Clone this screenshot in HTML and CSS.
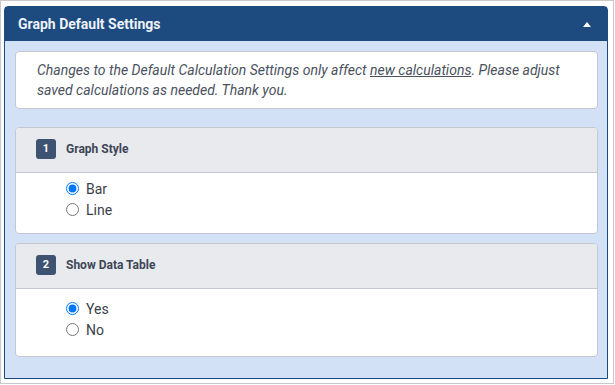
FILE: index.html
```html
<!DOCTYPE html>
<html lang="en">
<head>
    <meta charset="UTF-8">
    <meta name="viewport" content="width=device-width, initial-scale=1.0">
    <title>Graph Default Settings</title>
    <link rel="stylesheet" href="styles.css">
</head>
<body>
    <div class="frame">
        <section class="panel">
            <header class="panel-header">
                <h1>Graph Default Settings</h1>
                <span class="caret"></span>
            </header>

            <div class="panel-body">
                <div class="note">
                    <p>Changes to the Default Calculation Settings only affect <u>new calculations</u>. Please adjust saved calculations as needed. Thank you.</p>
                </div>

                <div class="card">
                    <div class="card-header">
                        <span class="badge">1</span>
                        <h2>Graph Style</h2>
                    </div>
                    <div class="card-body">
                        <label class="option"><input type="radio" name="style" checked> Bar</label>
                        <label class="option"><input type="radio" name="style"> Line</label>
                    </div>
                </div>

                <div class="card card-last">
                    <div class="card-header">
                        <span class="badge">2</span>
                        <h2>Show Data Table</h2>
                    </div>
                    <div class="card-body">
                        <label class="option"><input type="radio" name="table" checked> Yes</label>
                        <label class="option"><input type="radio" name="table"> No</label>
                    </div>
                </div>
            </div>
        </section>
    </div>
</body>
</html>
```

FILE: styles.css
```css
body {
    font-family: Roboto, "Liberation Sans", Arial, sans-serif;
    margin: 0;
    padding: 0;
    background-color: #fff;
    color: #333;
}

.frame {
    box-sizing: border-box;
    width: 614px;
    height: 384px;
    border: 1px solid #c9c9c9;
    padding: 5px 0 0 3px;
}

.panel {
    box-sizing: border-box;
    width: 604px;
    border: 1px solid #1d4b80;
    border-radius: 4px 4px 0 0;
    background-color: #d3e1f6;
}

.panel-header {
    display: flex;
    align-items: center;
    justify-content: space-between;
    height: 34px;
    padding: 0 16px 0 13px;
    background-color: #1d4b80;
}

.panel-header h1 {
    margin: 0;
    font-size: 14px;
    font-weight: bold;
    color: #eef2f7;
}

.caret {
    width: 0;
    height: 0;
    border-left: 4px solid transparent;
    border-right: 4px solid transparent;
    border-bottom: 5px solid #fff;
    margin-top: 1px;
}

.panel-body {
    padding: 10px 9px 21px 10px;
}

.note {
    background-color: #fff;
    border: 1px solid #c4c8cf;
    border-radius: 4px;
    padding: 8px 21px;
    margin-bottom: 18px;
}

.note p {
    margin: 0;
    font-size: 14px;
    font-style: italic;
    line-height: 20px;
    color: #4a5160;
}

.card {
    background-color: #fff;
    border: 1px solid #c4c8cf;
    border-radius: 4px;
    margin-bottom: 9px;
    overflow: hidden;
}

.card-last {
    margin-bottom: 0;
}

.card-header {
    display: flex;
    align-items: center;
    gap: 10px;
    height: 44px;
    padding: 0 20px;
    background-color: #e9eaee;
    border-bottom: 1px solid #c4c8cf;
}

.badge {
    width: 20px;
    height: 20px;
    border-radius: 3px;
    background-color: #3e5272;
    color: #fff;
    font-size: 11px;
    font-weight: bold;
    line-height: 20px;
    text-align: center;
    margin-top: -2px;
}

.card-header h2 {
    margin: 0 0 3px;
    font-size: 12px;
    font-weight: bold;
    color: #3d4656;
}

.card-body {
    padding: 5px 0 13px 45px;
}

.card-last .card-body {
    padding: 9px 0 16px 45px;
}

.option {
    display: flex;
    align-items: center;
    height: 21px;
    font-size: 14px;
    color: #3a3f4a;
}

.option input {
    width: 13px;
    height: 13px;
    margin: 0 7px 0 5px;
}
```
